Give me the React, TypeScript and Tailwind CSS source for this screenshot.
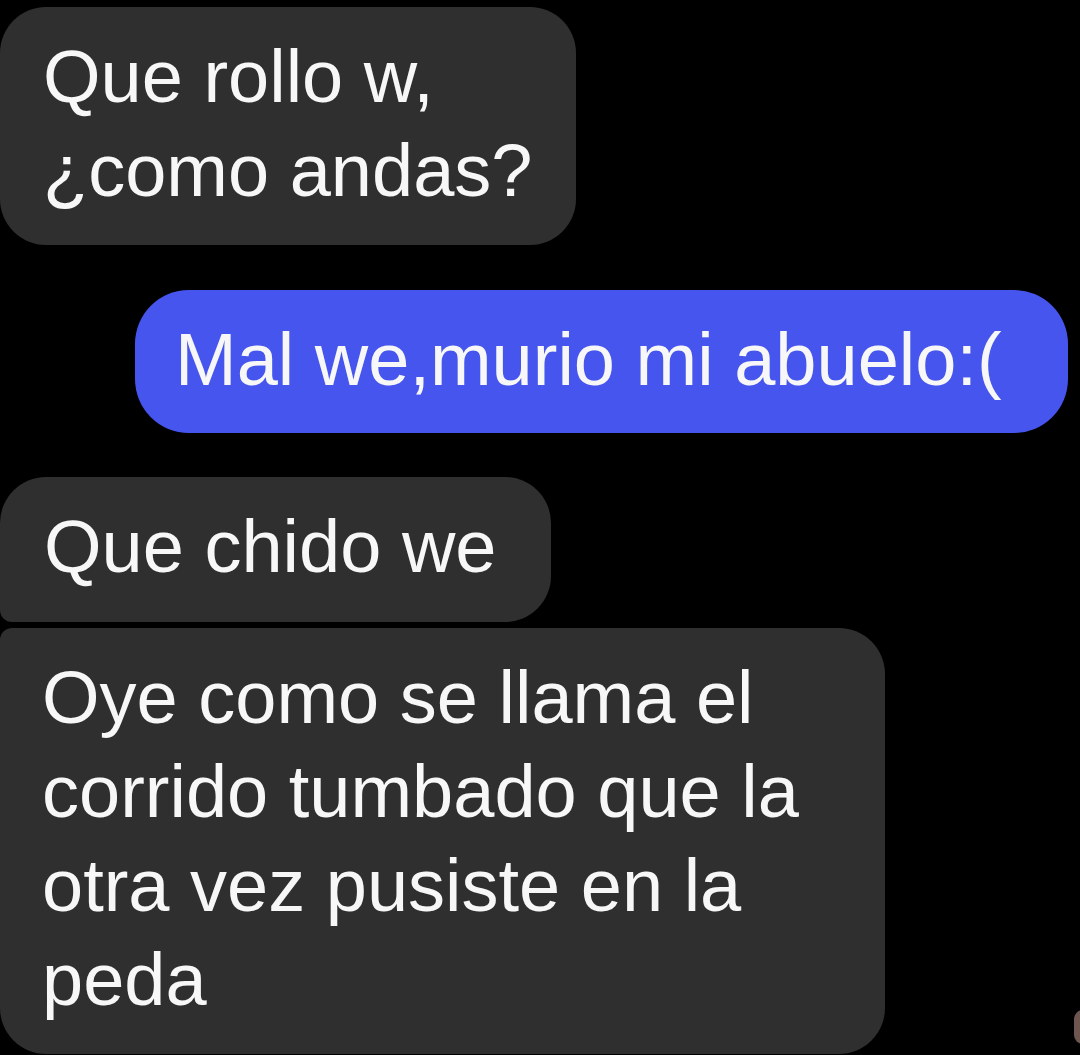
import React from "react";

function Line({ children }: { children: React.ReactNode }) {
  return <span className="block whitespace-nowrap">{children}</span>;
}

export default function App() {
  return (
    <div className="relative w-[1080px] h-[1055px] overflow-hidden bg-black font-[Liberation_Sans,Arial,Helvetica,sans-serif] text-[74px] leading-[94px] text-[#f7f7f7] antialiased">
      <div className="flex flex-col items-start pt-[7px]">
        <div className="w-[576px] rounded-[46px] bg-[#2f2f2f] pl-[43px] pt-[23px] pb-[27px]">
          <Line>Que rollo w,</Line>
          <Line>¿como andas?</Line>
        </div>

        <div className="mt-[45px] self-end mr-[12px] w-[933px] rounded-[54px] bg-[#4655ee] pl-[40px] pt-[23px] pb-[26px]">
          <Line>Mal we,murio mi abuelo:(</Line>
        </div>

        <div className="mt-[44px] w-[551px] rounded-tl-[46px] rounded-tr-[46px] rounded-br-[46px] rounded-bl-[12px] bg-[#2f2f2f] pl-[44px] pt-[23px] pb-[28px]">
          <Line>Que chido we</Line>
        </div>

        <div className="mt-[6px] w-[885px] rounded-tl-[12px] rounded-tr-[46px] rounded-br-[46px] rounded-bl-[46px] bg-[#2f2f2f] pl-[42px] pt-[23px] pb-[27px]">
          <Line>Oye como se llama el</Line>
          <Line>corrido tumbado que la</Line>
          <Line>otra vez pusiste en la</Line>
          <Line>peda</Line>
        </div>
      </div>
      <div className="absolute right-[-12px] top-[1010px] h-[34px] w-[18px] rounded-full bg-[#6e5550]" />
    </div>
  );
}
